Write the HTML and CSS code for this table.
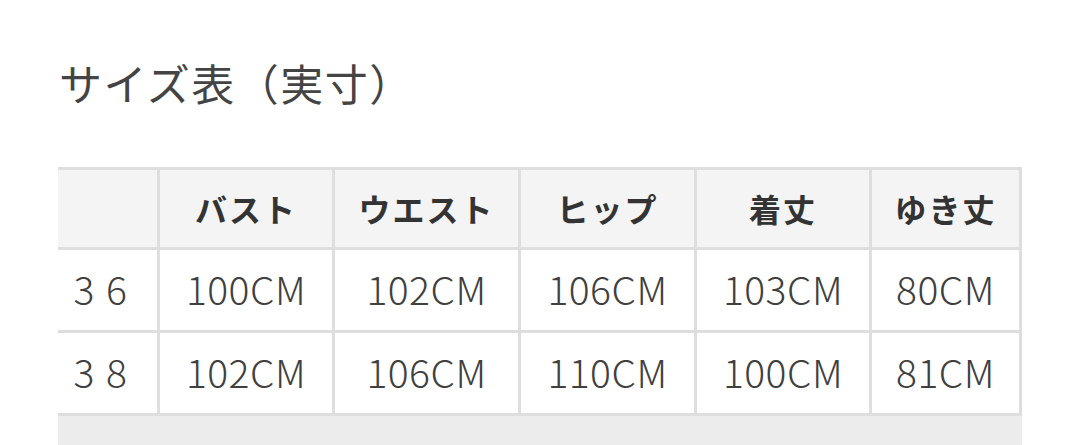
FILE: index.html
```html
<!DOCTYPE html>
<html lang="ja">
<head>
<meta charset="utf-8">
<link rel="stylesheet" href="styles.css">
</head>
<body>
<div class="page">
  <h2 class="title">サイズ表（実寸）</h2>
  <div class="size-table">
    <div class="cell head"></div>
    <div class="cell head">バスト</div>
    <div class="cell head">ウエスト</div>
    <div class="cell head">ヒップ</div>
    <div class="cell head">着丈</div>
    <div class="cell head">ゆき丈</div>

    <div class="cell size">3 6</div>
    <div class="cell">100CM</div>
    <div class="cell">102CM</div>
    <div class="cell">106CM</div>
    <div class="cell">103CM</div>
    <div class="cell">80CM</div>

    <div class="cell size">3 8</div>
    <div class="cell">102CM</div>
    <div class="cell">106CM</div>
    <div class="cell">110CM</div>
    <div class="cell">100CM</div>
    <div class="cell">81CM</div>
  </div>
  <div class="table-foot"></div>
</div>
</body>
</html>
```
FILE: styles.css
```css
html, body {
  margin: 0;
  padding: 0;
  background: #ffffff;
}
body {
  font-family: "Noto Sans CJK JP", "Noto Sans", sans-serif;
  color: #333;
  width: 1080px;
  height: 445px;
  overflow: hidden;
}
.page {
  padding: 52px 0 0 58px;
}
.title {
  margin: 0 0 0 1px;
  font-size: 43px;
  font-weight: 400;
  line-height: 60px;
  color: #444;
  letter-spacing: 1.5px;
}
.size-table {
  margin-top: 55px;
  width: 964px;
  box-sizing: border-box;
  display: grid;
  grid-template-columns: 99px 172px 183px 173px 172px 147px;
  grid-template-rows: 77px 80px 80px;
  gap: 3px;
  padding: 3px 3px 3px 0;
  background: #dedede;
}
.cell {
  background: #ffffff;
  display: flex;
  align-items: center;
  justify-content: center;
  font-size: 39px;
  font-weight: 300;
  color: #404040;
  letter-spacing: 0.5px;
  padding-bottom: 5px;
  box-sizing: border-box;
}
.cell.head {
  background: #f4f4f4;
  font-size: 32px;
  font-weight: 700;
  color: #333;
  letter-spacing: 2px;
  padding-bottom: 2px;
}
.cell.size {
  padding-right: 14px;
  word-spacing: 2px;
}
.table-foot {
  width: 964px;
  height: 40px;
  background: #ececec;
}
```
